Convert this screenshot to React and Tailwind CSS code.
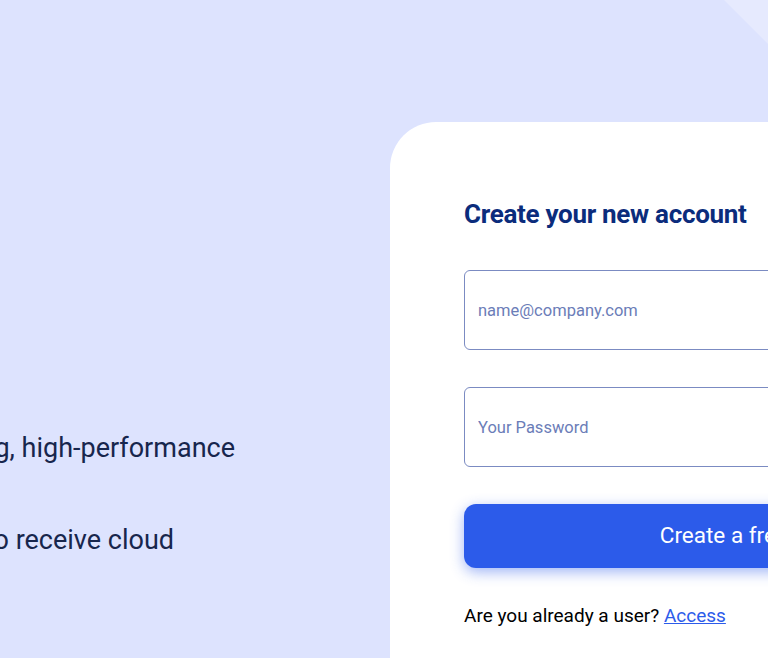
export default function App() {
  return (
    <div className="relative flex h-[658px] w-[768px] overflow-hidden bg-[#dde3fe] font-['Roboto',sans-serif]">
      <svg className="absolute right-0 top-0" width="60" height="60" viewBox="0 0 60 60">
        <polygon points="16,0 60,0 60,44" fill="#e6eafe" />
      </svg>
      <div className="flex w-[390px] shrink-0 flex-col pt-[430px] text-[27px] leading-[36px] text-[#17264d]">
        <div className="flex w-[235px] justify-end overflow-hidden whitespace-nowrap">
          <span>Enjoy fast-loading, high-performance</span>
        </div>
        <div className="mt-[56px] flex w-[174px] justify-end overflow-hidden whitespace-nowrap">
          <span>Sign up to receive cloud</span>
        </div>
      </div>
      <div className="mt-[122px] w-[760px] shrink-0 rounded-tl-[46px] bg-white pl-[74px] pt-[76px]">
        <h1 className="text-[26px] font-bold leading-[32px] tracking-[-0.3px] text-[#0b2c7c]">
          Create your new account
        </h1>
        <div className="mt-[40px] flex w-[606px] flex-col">
          <input
            type="email"
            placeholder="name@company.com"
            className="h-[80px] rounded-[6px] border border-[#7b8bc2] px-[13px] text-[16.5px] text-[#1b2a57] outline-none placeholder:text-[#6b7db8]"
          />
          <input
            type="password"
            placeholder="Your Password"
            className="mt-[37px] h-[80px] rounded-[6px] border border-[#7b8bc2] px-[13px] text-[16.5px] text-[#1b2a57] outline-none placeholder:text-[#6b7db8]"
          />
          <button className="mt-[37px] h-[64px] rounded-[12px] bg-[#2c5bea] text-[22.5px] text-white shadow-[0_4px_14px_rgba(44,91,234,0.45)]">
            Create a free account
          </button>
          <p className="mt-[33px] text-[19px] leading-[30px] text-black">
            Are you already a user?{" "}
            <a href="#" className="text-[#2c5bea] underline">
              Access
            </a>
          </p>
        </div>
      </div>
    </div>
  );
}
